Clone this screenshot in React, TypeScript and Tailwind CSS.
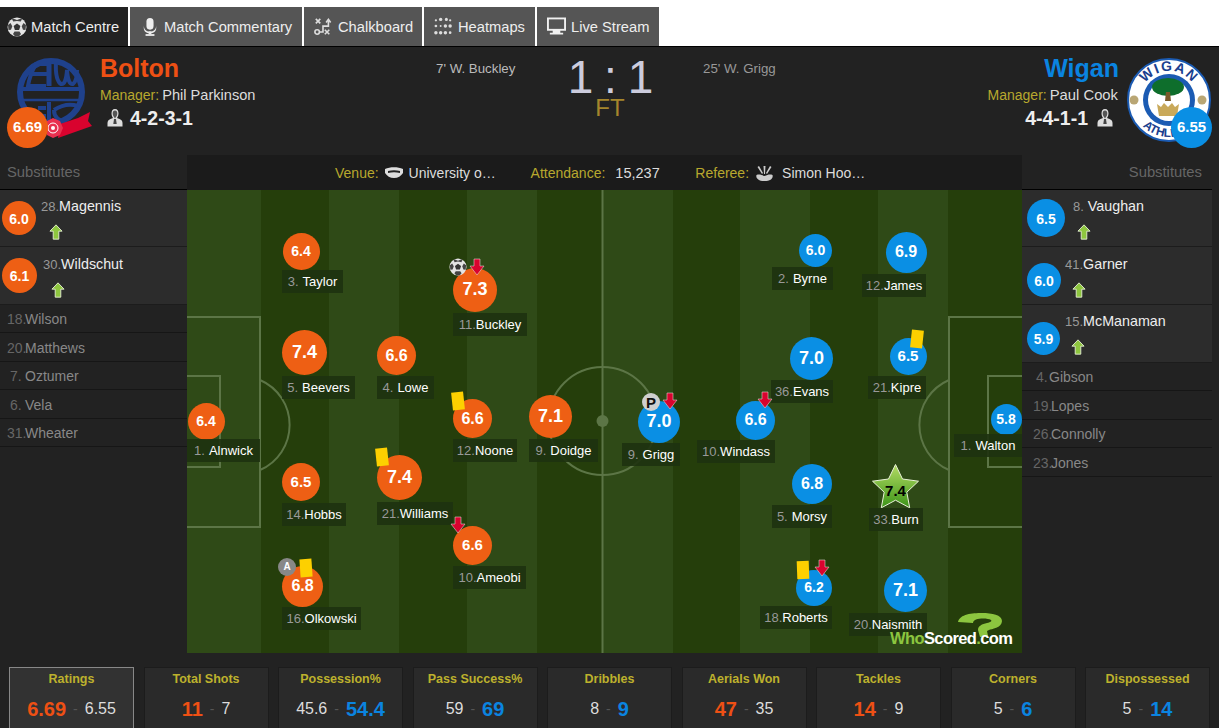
import React from "react";

const ORANGE = "#ee5f14";
const BLUE = "#0a8fe4";

type P = { r: string; n: string; name: string; cx: number; cy: number; d: number; lx: number; lw: number; ly: number; fs?: number; team: "h" | "a" };

function Ball({ size = 20 }: { size?: number }) {
  return (
    <svg width={size} height={size} viewBox="0 0 20 20">
      <circle cx="10" cy="10" r="9.5" fill="#e4e4e4" />
      <path d="M10 6.500l3.400 2.400-1.300 4h-4.200l-1.300-4z" fill="#333" />
      <path d="M6 1.500l4 1.500 4-1.500 1 .5-1.200 2.600L10 3.900 6.200 4.600 5 2zM1 8l2.500-2 1.800 3.200-1.300 3.600L1.500 13zM19 8l-2.500-2-1.800 3.200 1.300 3.600 2.500.2zM6 17l1.500-2.400h5L14 17l-2 2.200H8z" fill="#444" />
    </svg>
  );
}

function Down({ x, y }: { x: number; y: number }) {
  return (
    <svg className="absolute" style={{ left: x, top: y }} width="16" height="18" viewBox="0 0 16 18">
      <path d="M5 1h6v7h4l-7 9-7-9h4z" fill="#d9032e" stroke="#e8d8d8" strokeOpacity=".55" strokeWidth="1" />
    </svg>
  );
}

function Yellow({ x, y, tilt = -6 }: { x: number; y: number; tilt?: number }) {
  return <div className="absolute w-[12px] h-[18px] bg-[#fdd000]" style={{ left: x, top: y, transform: `rotate(${tilt}deg)` }} />;
}

function GoalBall({ x, y }: { x: number; y: number }) {
  return (
    <div className="absolute" style={{ left: x, top: y }}>
      <Ball size={18} />
    </div>
  );
}

function OwnPenalty({ x, y }: { x: number; y: number }) {
  return (
    <div className="absolute w-[18px] h-[18px] rounded-full bg-[#cfcfcf] flex items-center justify-center" style={{ left: x, top: y }}>
      <span className="text-[15px] font-bold text-[#111] leading-none">P</span>
    </div>
  );
}

function Captain({ x, y }: { x: number; y: number }) {
  return (
    <div className="absolute w-[18px] h-[18px] rounded-full bg-[#888] flex items-center justify-center" style={{ left: x, top: y }}>
      <span className="text-[10px] font-bold text-white leading-none">A</span>
    </div>
  );
}

const players: P[] = [
  { r: "6.4", n: "1.", name: "Alnwick", cx: 206, cy: 421, d: 37, lx: 187, lw: 73, ly: 439, team: "h" },
  { r: "6.4", n: "3.", name: "Taylor", cx: 301, cy: 251, d: 37, lx: 282, lw: 61, ly: 270, team: "h" },
  { r: "7.4", n: "5.", name: "Beevers", cx: 304.5, cy: 352, d: 45, lx: 282, lw: 73, ly: 376, fs: 18, team: "h" },
  { r: "6.6", n: "4.", name: "Lowe", cx: 396.5, cy: 355.5, d: 39, lx: 377, lw: 57, ly: 376, fs: 16, team: "h" },
  { r: "7.3", n: "11.", name: "Buckley", cx: 475, cy: 289.5, d: 44, lx: 453, lw: 74, ly: 313, fs: 18, team: "h" },
  { r: "6.6", n: "12.", name: "Noone", cx: 472.5, cy: 418.5, d: 39, lx: 453, lw: 64, ly: 439, fs: 16, team: "h" },
  { r: "7.1", n: "9.", name: "Doidge", cx: 550.5, cy: 416.5, d: 43, lx: 529, lw: 69, ly: 439, fs: 18, team: "h" },
  { r: "6.5", n: "14.", name: "Hobbs", cx: 301, cy: 482, d: 38, lx: 282, lw: 64, ly: 503, fs: 15, team: "h" },
  { r: "7.4", n: "21.", name: "Williams", cx: 399.5, cy: 477, d: 45, lx: 377, lw: 76, ly: 502, fs: 18, team: "h" },
  { r: "6.6", n: "10.", name: "Ameobi", cx: 472.5, cy: 545.5, d: 39, lx: 453, lw: 73, ly: 566, fs: 15, team: "h" },
  { r: "6.8", n: "16.", name: "Olkowski", cx: 302.5, cy: 586, d: 41, lx: 282, lw: 79, ly: 607, fs: 16, team: "h" },
  { r: "6.0", n: "2.", name: "Byrne", cx: 815.5, cy: 250, d: 33, lx: 772, lw: 61, ly: 267, team: "a" },
  { r: "6.9", n: "12.", name: "James", cx: 906, cy: 252, d: 41, lx: 862, lw: 64, ly: 274, fs: 16, team: "a" },
  { r: "7.0", n: "36.", name: "Evans", cx: 811.5, cy: 358, d: 43, lx: 771, lw: 62, ly: 380, fs: 18, team: "a" },
  { r: "6.5", n: "21.", name: "Kipre", cx: 908, cy: 356, d: 37, lx: 868, lw: 58, ly: 376, fs: 15, team: "a" },
  { r: "6.6", n: "10.", name: "Windass", cx: 755.5, cy: 420, d: 39, lx: 697, lw: 78, ly: 440, fs: 16, team: "a" },
  { r: "7.0", n: "9.", name: "Grigg", cx: 659, cy: 421.5, d: 42, lx: 622, lw: 58, ly: 443, fs: 18, team: "a" },
  { r: "5.8", n: "1.", name: "Walton", cx: 1006, cy: 419, d: 31, lx: 954, lw: 68, ly: 434, team: "a" },
  { r: "6.8", n: "5.", name: "Morsy", cx: 812, cy: 484, d: 40, lx: 772, lw: 60, ly: 505, fs: 16, team: "a" },
  { r: "6.2", n: "18.", name: "Roberts", cx: 814, cy: 587.5, d: 36, lx: 760, lw: 72, ly: 606, team: "a" },
  { r: "7.1", n: "20.", name: "Naismith", cx: 905.5, cy: 590.5, d: 43, lx: 849, lw: 78, ly: 613, fs: 18, team: "a" },
];

function Pitch() {
  const stripes = [74, 68, 70, 68, 70, 66, 70, 67, 70, 68, 70, 74];
  return (
    <div className="relative w-[835px] h-[463px] flex overflow-hidden">
      {stripes.map((w, i) => (
        <div key={i} className={i % 2 === 0 ? "h-full bg-[#2f4a17]" : "h-full bg-[#253e0b]"} style={{ width: w }} />
      ))}
      <svg className="absolute left-0 top-0" width="835" height="463" viewBox="0 0 835 463" fill="none" stroke="#5c7546" strokeWidth="2">
        <line x1="415.5" y1="0" x2="415.5" y2="463" />
        <circle cx="415.5" cy="231" r="54" />
        <circle cx="415.5" cy="231" r="6" fill="#5c7546" stroke="none" />
        <path d="M0 127H73V337H0" />
        <path d="M0 186H33V277H0" />
        <path d="M73 190A49 49 0 0 1 73 280" />
        <path d="M835 127H762V337H835" />
        <path d="M835 186H801V277H835" />
        <path d="M762 190A49 49 0 0 0 762 280" />
      </svg>
    </div>
  );
}

function NameLabel({ x, y, w, n, name }: { x: number; y: number; w: number; n: string; name: string }) {
  return (
    <div className="absolute h-[23px] bg-[#1e3210]/90 flex items-center justify-center whitespace-nowrap text-[13px] text-white" style={{ left: x, top: y, width: w }}>
      <span className="text-[#999]">{n}</span>
      {n.length === 2 ? <span className="w-[4px]" /> : null}
      <span>{name}</span>
    </div>
  );
}

function Player({ p }: { p: P }) {
  return (
    <>
      <div
        className="absolute rounded-full flex items-center justify-center font-bold text-white"
        style={{ left: p.cx - p.d / 2, top: p.cy - p.d / 2, width: p.d, height: p.d, background: p.team === "h" ? ORANGE : BLUE, fontSize: p.fs ?? 14 }}
      >
        {p.r}
      </div>
      <NameLabel x={p.lx} y={p.ly} w={p.lw} n={p.n} name={p.name} />
    </>
  );
}

function Star() {
  return (
    <>
      <svg className="absolute" style={{ left: 871, top: 463 }} width="49" height="46" viewBox="0 0 49 46">
        <defs>
          <linearGradient id="st" x1="0" y1="0" x2="0" y2="1">
            <stop offset="0" stopColor="#b4dc64" />
            <stop offset="1" stopColor="#3c9418" />
          </linearGradient>
        </defs>
        <path d="M24.500 1.500l7 14.500 16 2.200-11.700 11 2.900 15.600-14.200-7.600-14.200 7.600 2.900-15.600L1.500 18.200l16-2.200z" fill="url(#st)" stroke="#e8f0d8" strokeWidth="1" />
      </svg>
      <div className="absolute w-[49px] text-center text-[15px] font-bold text-black" style={{ left: 871, top: 480 }}>7.4</div>
      <NameLabel x={869} y={508} w={54} n="33." name="Burn" />
    </>
  );
}

function Logo() {
  return (
    <div className="absolute w-[128px] h-[38px]" style={{ left: 890, top: 612 }}>
      <svg className="absolute top-0" style={{ left: 67 }} width="46" height="26" viewBox="0 0 46 26" fill="none">
        <path d="M1 10C3 2 15 1 25 1c10 0 20 2 20 8 0 7-11 8-13 9l-2 1 1 5-8 1-2-7c0-4 4-6 9-7 4-.8 5-2 4-3-3-2-11-2-15-.5-2 .8-3 2-3 3.500z" fill="#8cc63f" />
      </svg>
      <div className="absolute left-0 bottom-[3px] w-full text-[16.500px] font-bold tracking-[-0.6px] leading-[18px] whitespace-nowrap text-white">
        <span className="text-[#8cc63f]">Who</span>Scored<span className="text-[#8cc63f]">.</span>com
      </div>
    </div>
  );
}

function Mic() {
  return (
    <svg width="16" height="22" viewBox="0 0 18 22" fill="#eee">
      <rect x="5" y="1" width="8" height="13" rx="4" />
      <path d="M2 9c0 5 3 7 7 7s7-2 7-7v3c0 4-3 6-7 6s-7-2-7-6z" />
      <rect x="7.500" y="16" width="3" height="3" />
      <rect x="4" y="19" width="10" height="2" />
    </svg>
  );
}

function Chalk() {
  return (
    <svg width="18" height="20" viewBox="0 0 20 20" fill="none" stroke="#ddd" strokeWidth="1.800">
      <path d="M2 1l5 5M7 1L2 6M12 13l5 5M17 13l-5 5" />
      <circle cx="3.500" cy="15.500" r="2.500" />
      <path d="M6 15.500h4V9h6V3" />
      <path d="M13.500 5L16 1.500 18.500 5" />
    </svg>
  );
}

function Heat() {
  const pts = [[2, 3, 1.2], [7, 2, 1.8], [13, 2, 1.6], [17, 3, 1.2], [2, 9, 1.4], [7, 9, 1], [12, 9, 1.8], [17, 9, 1.8], [2, 16, 1.8], [7, 16, 1.8], [12, 16, 1.8], [17, 16, 1.4]];
  return (
    <svg width="19" height="19" viewBox="0 0 20 19" fill="#ddd">
      {pts.map((p, i) => (
        <circle key={i} cx={p[0]} cy={p[1]} r={p[2]} />
      ))}
    </svg>
  );
}

function Monitor() {
  return (
    <svg width="19" height="19" viewBox="0 0 20 19">
      <path d="M0 0h20v14h-6v2h3v2H3v-2h3v-2H0z" fill="#f0f0f0" />
      <rect x="2" y="2" width="16" height="10" fill="#555" />
    </svg>
  );
}

function ManagerIcon() {
  return (
    <svg width="16" height="18" viewBox="0 0 16 18">
      <path d="M8 0c2.500 0 3.500 2 3.500 4.500 0 2-1 3.500-1.500 4.500l2.500 1c2 .8 3 2 3 4v3.500H.5V14c0-2 1-3.200 3-4l2.500-1c-.5-1-1.500-2.500-1.500-4.500C4.500 2 5.500 0 8 0z" fill="#ddd" />
      <path d="M8 1.500c1.500 0 2.300 1.300 2.300 3 0 2-1.300 3.500-2.300 5-1-1.500-2.300-3-2.300-5 0-1.700.8-3 2.300-3z" fill="#555" />
      <path d="M7 10h2l.7 5H6.300z" fill="#444" />
    </svg>
  );
}

function BoltonLogo() {
  return (
    <svg width="100" height="100" viewBox="0 0 100 100">
      <g fill="none" stroke="#1f418c">
        <circle cx="51" cy="42" r="31" strokeWidth="6" />
        <path d="M20 39H82" strokeWidth="4" />
        <path d="M21 50H81" strokeWidth="2.500" />
        <path d="M49 11V36" strokeWidth="5" />
        <path d="M47 14H36Q30 24 28 36H46M30 24H47" strokeWidth="4" />
        <path d="M56 12Q55 30 61 34Q66 35 67 20Q68 35 73 34Q77 31 77 20" strokeWidth="4" />
        <path d="M49 52V76M38 58H46M38 66H46M54 60Q66 52 78 56M54 60Q54 70 66 72" strokeWidth="4" />
      </g>
      <path d="M60 74L78 68L90 62L88 71L92 76L75 82L58 88Z" fill="#d9032e" />
      <path d="M53 68l7 3 3 7-3 7-7 3-6-3-2-7 2-7z" fill="#e8304f" />
      <circle cx="53" cy="78" r="5" fill="none" stroke="#fff" strokeWidth="1" />
      <circle cx="53" cy="78" r="2" fill="#fff" />
    </svg>
  );
}

function WiganLogo() {
  return (
    <svg width="84" height="85" viewBox="0 0 84 85">
      <defs>
        <path id="wt" d="M13 42a29 29 0 0 1 58 0" />
        <path id="wb" d="M5 42a37 37 0 0 0 74 0" />
      </defs>
      <circle cx="42" cy="42" r="41" fill="#fff" stroke="#1b5bb3" strokeWidth="2" />
      <circle cx="42" cy="42" r="26" fill="#1b5bb3" />
      <circle cx="42" cy="42" r="21" fill="#fff" />
      <text fontSize="14" fontWeight="700" fill="#1b3f8f" fontFamily="'Liberation Sans', sans-serif" letterSpacing="1.500">
        <textPath href="#wt" startOffset="50%" textAnchor="middle">WIGAN</textPath>
      </text>
      <text fontSize="12" fontWeight="700" fill="#1b3f8f" fontFamily="'Liberation Sans', sans-serif">
        <textPath href="#wb" startOffset="50%" textAnchor="middle">ATHLETIC</textPath>
      </text>
      <circle cx="7" cy="42" r="4.500" fill="#b9a674" />
      <circle cx="75" cy="42" r="4.500" fill="#b9a674" />
      <ellipse cx="41" cy="29" rx="16" ry="9" fill="#0e6e2c" />
      <path d="M39 34h4l1 9h-6z" fill="#7a5a2a" />
      <path d="M30 46l4 3 3-4 4 4 4-4 3 4 4-3-2 12H32z" fill="#c9a95a" />
    </svg>
  );
}

function UpArrow() {
  return (
    <svg width="14" height="16" viewBox="0 0 15 19" preserveAspectRatio="none">
      <path d="M7.500 1L14 8.500H10.500V18h-6V8.500H1z" fill="#8ec63f" stroke="#e8f0d8" strokeWidth="1" />
    </svg>
  );
}

function SubOn({ r, n, name, d, h, pad, arrowPad, circleTop, textTop, side }: { r: string; n: string; name: string; d: number; h: number; pad: number; arrowPad: number; circleTop: number; textTop: number; side: number }) {
  const color = side === 0 ? ORANGE : BLUE;
  return (
    <div className="flex items-start bg-[#2c2c2c] border-b border-[#1c1c1c]" style={{ height: h, paddingLeft: side === 0 ? 2 : 5 }}>
      <div className="flex shrink-0 items-center justify-center rounded-full text-[14px] font-bold text-white pt-[2px]" style={{ width: d, height: d, marginTop: circleTop, background: color }}>
        {r}
      </div>
      <div className="flex flex-col" style={{ paddingLeft: pad }}>
        <div className="text-[14.300px] leading-[17px] whitespace-nowrap text-[#eee]" style={{ marginTop: textTop }}>
          <span className="text-[13px] text-[#999]">{n}</span>
          {name}
        </div>
        <div className="mt-[9px] h-[16px]" style={{ paddingLeft: arrowPad }}>
          <UpArrow />
        </div>
      </div>
    </div>
  );
}

function Bench({ n, name, h, indent, nameAt }: { n: string; name: string; h: number; indent: number; nameAt: number }) {
  return (
    <div className="flex items-center border-b border-[#161616] text-[14px] whitespace-nowrap pt-[2px]" style={{ height: h, paddingLeft: indent }}>
      <span className="text-[#666]" style={{ width: nameAt - indent }}>{n}</span>
      <span className="text-[#888]">{name}</span>
    </div>
  );
}

const stats = [
  { t: "Ratings", a: "6.69", b: "6.55", w: "a", active: true },
  { t: "Total Shots", a: "11", b: "7", w: "a" },
  { t: "Possession%", a: "45.6", b: "54.4", w: "b" },
  { t: "Pass Success%", a: "59", b: "69", w: "b" },
  { t: "Dribbles", a: "8", b: "9", w: "b" },
  { t: "Aerials Won", a: "47", b: "35", w: "a" },
  { t: "Tackles", a: "14", b: "9", w: "a" },
  { t: "Corners", a: "5", b: "6", w: "b" },
  { t: "Dispossessed", a: "5", b: "14", w: "b" },
];

function Stat({ s }: { s: (typeof stats)[number] }) {
  return (
    <div className={`w-[125px] h-[70px] shrink-0 text-center ${s.active ? "bg-[#323232] border border-[#888]" : "bg-[#2a2a2a] border border-[#1c1c1c]"}`}>
      <div className="text-[12.500px] font-bold text-[#bdb12d] leading-[16px] mt-[3px]">{s.t}</div>
      <div className="flex items-center justify-center h-[24px] mt-[10px] gap-[7px]">
        <span className={s.w === "a" ? "text-[20px] font-bold text-[#ee5014]" : "text-[16px] text-[#ddd]"}>{s.a}</span>
        <span className="text-[#555] text-[14px]">-</span>
        <span className={s.w === "b" ? "text-[20px] font-bold text-[#0a84e0]" : "text-[16px] text-[#ddd]"}>{s.b}</span>
      </div>
    </div>
  );
}

function Tab({ icon, label, active, w, pl, gap }: { icon: React.ReactNode; label: string; active?: boolean; w: number; pl: number; gap: number }) {
  return (
    <div className={`h-[39px] flex items-center text-[14.700px] text-[#eee] ${active ? "bg-[#222]" : "bg-[#555]"}`} style={{ width: w, paddingLeft: pl, gap }}>
      {icon}
      <span className="whitespace-nowrap pt-[1px]">{label}</span>
    </div>
  );
}

export default function App() {
  return (
    <div className="relative w-[1219px] h-[728px] overflow-hidden bg-white text-white" style={{ fontFamily: "'Liberation Sans', Arial, sans-serif" }}>
      <div className="flex gap-[2px] pt-[7px] h-[46px]">
        <Tab active w={128} pl={7} gap={4} icon={<Ball size={20} />} label="Match Centre" />
        <Tab w={172} pl={12} gap={6} icon={<Mic />} label="Match Commentary" />
        <Tab w={118} pl={10} gap={6} icon={<Chalk />} label="Chalkboard" />
        <Tab w={111} pl={10} gap={5} icon={<Heat />} label="Heatmaps" />
        <Tab w={122} pl={10} gap={5} icon={<Monitor />} label="Live Stream" />
      </div>
      <div className="h-[1px] bg-black" />
      <div className="h-[681px] bg-[#222]">
        {/* header */}
        <div className="relative flex h-[108px]">
          <div className="w-[100px] shrink-0" />
          <div className="w-[330px] shrink-0 pt-[6px]">
            <div className="text-[25px] font-bold leading-[30px] text-[#ee5014]">Bolton</div>
            <div className="text-[14px] leading-[17px] mt-[4px]">
              <span className="text-[#b8a82e]">Manager:</span>
              <span className="text-[14.600px] text-[#ddd] ml-[3px]">Phil Parkinson</span>
            </div>
            <div className="flex items-center mt-[3px] pl-[7px] gap-[7px]">
              <ManagerIcon />
              <span className="text-[19.500px] font-bold leading-[22px] text-[#eee]">4-2-3-1</span>
            </div>
          </div>
          <div className="w-[128px] shrink-0 pt-[13px] pl-[6px] text-[13.300px] leading-[17px] text-[#bbb]">7' W. Buckley</div>
          <div className="w-[104px] shrink-0 flex flex-col items-center pt-[7px]">
            <div className="text-[46px] leading-[46px] tracking-[-1px] text-[#ccd] whitespace-nowrap">1 : 1</div>
            <div className="text-[24px] leading-[20px] -mt-[2px] text-[#a5862c]">FT</div>
          </div>
          <div className="w-[161px] shrink-0 pt-[13px] pl-[41px] text-[13.300px] leading-[17px] text-[#999]">25' W. Grigg</div>
          <div className="flex-1 flex flex-col items-end pt-[6px] pr-[101px]">
            <div className="text-[25px] font-bold leading-[30px] text-[#0a84e0] -mr-[1px]">Wigan</div>
            <div className="text-[14px] leading-[17px] mt-[4px] whitespace-nowrap">
              <span className="text-[#b8a82e]">Manager:</span>
              <span className="text-[14.800px] text-[#ddd] ml-[3px]">Paul Cook</span>
            </div>
            <div className="flex items-center mt-[3px] gap-[9px] pr-[5px]">
              <span className="text-[19.500px] font-bold leading-[22px] text-[#eee]">4-4-1-1</span>
              <ManagerIcon />
            </div>
          </div>
          <div className="absolute left-0 top-[3px]">
            <BoltonLogo />
          </div>
          <div className="absolute flex h-[41px] w-[41px] items-center justify-center rounded-full text-[15px] font-bold text-white left-[7px] top-[60px]" style={{ background: ORANGE }}>6.69</div>
          <div className="absolute left-[1127px] top-[11px]">
            <WiganLogo />
          </div>
          <div className="absolute flex h-[41px] w-[41px] items-center justify-center rounded-full text-[15px] font-bold text-white left-[1171px] top-[60px]" style={{ background: BLUE }}>6.55</div>
        </div>
        {/* middle */}
        <div className="flex h-[498px]">
          <div className="w-[187px] shrink-0">
            <div className="h-[35px] flex items-center pl-[7px] text-[14.800px] text-[#666] border-b border-black">Substitutes</div>
            <SubOn side={0} r="6.0" n="28." name="Magennis" d={34} h={57} pad={5} arrowPad={8} circleTop={11} textTop={8} />
            <SubOn side={0} r="6.1" n="30." name="Wildschut" d={35} h={58} pad={6} arrowPad={8} circleTop={11} textTop={9} />
            <Bench n="18." name="Wilson" h={28} indent={7} nameAt={25} />
            <Bench n="20." name="Matthews" h={29} indent={7} nameAt={25} />
            <Bench n="7." name="Oztumer" h={28} indent={10} nameAt={25} />
            <Bench n="6." name="Vela" h={29} indent={10} nameAt={25} />
            <Bench n="31." name="Wheater" h={28} indent={7} nameAt={25} />
          </div>
          <div className="w-[835px] shrink-0">
            <div className="h-[35px] bg-[#1b1b1b] flex items-center text-[14px] whitespace-nowrap pl-[148px] pt-[1px]">
              <span className="text-[#b8a82e]">Venue:</span>
              <svg className="ml-[5px] mr-[5px]" width="20" height="12" viewBox="0 0 20 12">
                <path d="M1 2c5-2.500 13-2.500 18 0v4c-2 3-5 5-9 5s-7-2-9-5z" fill="#ddd" />
                <path d="M4 4c4-1 8-1 12 0v2c-4-1-8-1-12 0z" fill="#222" />
              </svg>
              <span className="text-[#ddd] w-[122px]">University o…</span>
              <span className="text-[#b8a82e]">Attendance:</span>
              <span className="text-[14.500px] text-[#ddd] ml-[10px] w-[80px] pt-[1px]">15,237</span>
              <span className="text-[#b8a82e]">Referee:</span>
              <svg className="ml-[6px] mr-[8px]" width="19" height="17" viewBox="0 0 18 17" fill="#ccc">
                <path d="M1 10c3-1 5 0 8 1 3-1 5-2 8-1 1 3-2 6-8 6s-9-3-8-6zM8 1h2l-.5 8h-1zM2 2l1.500-1 4 7-1 1zM16 2l-1.500-1-4 7 1 1z" />
              </svg>
              <span className="text-[#ddd]">Simon Hoo…</span>
            </div>
            <Pitch />
          </div>
          <div className="flex-1">
            <div className="h-[35px] flex items-center justify-end pr-[10px] text-[14.800px] text-[#666] border-b border-black w-[190px]">Substitutes</div>
            <div className="w-[190px]">
              <SubOn side={1} r="6.5" n="8." name=" Vaughan" d={38} h={57} pad={8} arrowPad={4} circleTop={9} textTop={8} />
              <SubOn side={1} r="6.0" n="41." name="Garner" d={34} h={58} pad={4} arrowPad={7} circleTop={16} textTop={9} />
              <SubOn side={1} r="5.9" n="15." name="McManaman" d={33} h={58} pad={5} arrowPad={6} circleTop={17} textTop={8} />
              <Bench n="4." name="Gibson" h={28} indent={14} nameAt={27} />
              <Bench n="19." name="Lopes" h={29} indent={11} nameAt={29} />
              <Bench n="26." name="Connolly" h={28} indent={11} nameAt={29} />
              <Bench n="23." name="Jones" h={29} indent={11} nameAt={29} />
            </div>
          </div>
        </div>
        {/* stats */}
        <div className="flex gap-[9.500px] pl-[9px] pt-[14px]">
          {stats.map((s) => (
            <Stat key={s.t} s={s} />
          ))}
        </div>
      </div>

      {/* players sit on the pitch canvas */}
      <div className="absolute inset-0">
        {players.map((p) => (
          <Player key={p.name} p={p} />
        ))}
        <Star />
        <GoalBall x={449} y={258} />
        <Down x={469} y={258} />
        <Yellow x={452} y={392} />
        <Yellow x={376} y={448} />
        <Down x={450} y={516} />
        <Captain x={278} y={558} />
        <Yellow x={300} y={559} tilt={-4} />
        <Yellow x={797} y={561} tilt={-2} />
        <Down x={814} y={559} />
        <Yellow x={911} y={330} tilt={6} />
        <Down x={757} y={391} />
        <OwnPenalty x={642} y={393} />
        <Down x={662} y={392} />
        <Logo />
      </div>
    </div>
  );
}
